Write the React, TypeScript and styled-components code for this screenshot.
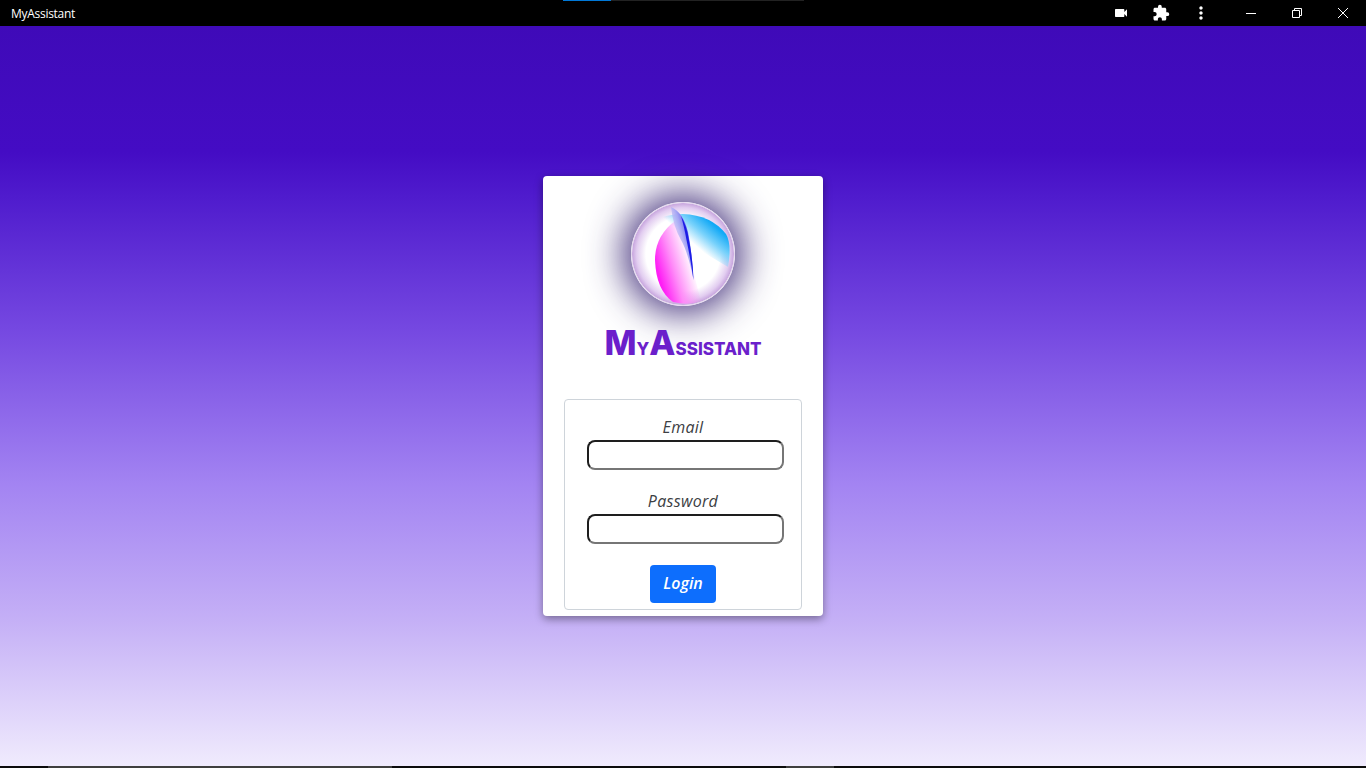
import React from 'react';
import styled, { createGlobalStyle } from 'styled-components';
import { MdExtension, MdMoreVert, MdVideocam } from 'react-icons/md';

const GlobalStyle = createGlobalStyle`
  html, body {
    margin: 0;
    padding: 0;
    height: 100%;
    overflow: hidden;
  }

  body {
    font-family: 'Open Sans', sans-serif;
  }

  * {
    box-sizing: border-box;
  }
`;

const Logo = () => (
  <svg width="104" height="104" viewBox="0 0 104 104">
    <defs>
      <radialGradient id="ball" cx="50%" cy="50%" r="50%">
        <stop offset="0" stopColor="#ffffff" />
        <stop offset="0.72" stopColor="#ffffff" />
        <stop offset="0.9" stopColor="#e2cdf0" />
        <stop offset="0.98" stopColor="#c9a8df" />
        <stop offset="1" stopColor="#efe6f5" />
      </radialGradient>
      <linearGradient id="sky" gradientUnits="userSpaceOnUse" x1="64" y1="43" x2="82" y2="22">
        <stop offset="0" stopColor="#79d2fb" stopOpacity="0" />
        <stop offset="0.5" stopColor="#79d2fb" />
        <stop offset="1" stopColor="#12a9f6" />
      </linearGradient>
      <linearGradient id="pink" gradientUnits="userSpaceOnUse" x1="24" y1="60" x2="58" y2="50">
        <stop offset="0" stopColor="#ff1df5" />
        <stop offset="0.45" stopColor="#ff8bf8" />
        <stop offset="1" stopColor="#ff8bf8" stopOpacity="0" />
      </linearGradient>
      <linearGradient id="blade" gradientUnits="userSpaceOnUse" x1="38" y1="30" x2="58" y2="24">
        <stop offset="0" stopColor="#d6c8f4" stopOpacity="0.2" />
        <stop offset="0.6" stopColor="#a8a8f4" />
        <stop offset="1" stopColor="#5a5aec" />
      </linearGradient>
    </defs>
    <circle cx="52" cy="52" r="51.5" fill="url(#ball)" stroke="#e4d6ee" strokeWidth="1" />
    <path d="M21 20 Q34 12 52 12 Q80 13 95 32 Q101 42 97 65 Z" fill="url(#sky)" />
    <path d="M44 19 Q24 34 24 58 Q25 88 42 100 Q58 104 70 99 L60 60 Z" fill="url(#pink)" />
    <path d="M40 5 Q52 10 57 30 Q61 50 62.5 78 Q57 50 50 38 Q42 24 40 5 Z" fill="url(#blade)" />
    <path d="M50 14 Q56 24 58 38 Q62 58 62.5 78 Q59 54 55.5 38 Q53 24 50 14 Z" fill="#1c1ce6" />
  </svg>
);

const App = () => {
  return (
    <Window>
      <GlobalStyle />
      <TitleBar>
        <AppName>MyAssistant</AppName>
        <Progress>
          <ProgressFill />
        </Progress>
        <ToolIcons>
          <ToolIcon>
            <MdVideocam size={16} />
          </ToolIcon>
          <ToolIcon>
            <MdExtension size={18} />
          </ToolIcon>
          <ToolIcon>
            <MdMoreVert size={20} />
          </ToolIcon>
        </ToolIcons>
        <WindowControls>
          <ControlButton>
            <svg width="10" height="10" viewBox="0 0 10 10">
              <path d="M0 5.5h10" stroke="#fff" fill="none" />
            </svg>
          </ControlButton>
          <ControlButton>
            <svg width="10" height="10" viewBox="0 0 10 10">
              <path d="M.5 2.5h7v7h-7zM2.5 2.5v-2h7v7h-2" stroke="#fff" fill="none" />
            </svg>
          </ControlButton>
          <ControlButton>
            <svg width="10" height="10" viewBox="0 0 10 10">
              <path d="M0 0l10 10M10 0L0 10" stroke="#fff" fill="none" />
            </svg>
          </ControlButton>
        </WindowControls>
      </TitleBar>
      <Main>
        <Card>
          <LogoGlow>
            <Logo />
          </LogoGlow>
          <Brand>
            M<BrandSmall>y</BrandSmall>A<BrandSmall>ssistant</BrandSmall>
          </Brand>
          <LoginForm>
            <Field>
              <FieldLabel htmlFor="email">Email</FieldLabel>
              <FieldInput id="email" type="text" />
            </Field>
            <Field>
              <FieldLabel htmlFor="password">Password</FieldLabel>
              <FieldInput id="password" type="password" />
            </Field>
            <LoginButton type="button">Login</LoginButton>
          </LoginForm>
        </Card>
      </Main>
      <BottomBar>
        <BottomSegment $width={344} $gap={48} />
        <BottomSegment $width={48} $gap={394} />
      </BottomBar>
    </Window>
  );
};

const Window = styled.div`
  display: flex;
  flex-direction: column;
  width: 100vw;
  height: 100vh;
  background: #000000;
`;

const TitleBar = styled.div`
  position: relative;
  display: flex;
  align-items: center;
  flex: 0 0 26px;
  padding-left: 11px;
  background: #000000;
  color: #ffffff;
`;

const AppName = styled.span`
  flex: 1;
  padding-top: 2px;
  font-family: 'Open Sans', sans-serif;
  font-size: 12px;
  line-height: 24px;
  letter-spacing: -0.28px;
`;

const Progress = styled.div`
  position: absolute;
  top: 0;
  left: 563px;
  width: 241px;
  height: 1px;
  background: #222222;
`;

const ProgressFill = styled.div`
  width: 48px;
  height: 100%;
  background: #0078d7;
`;

const ToolIcons = styled.div`
  display: flex;
  align-items: center;
  margin-right: 7px;
  color: #ffffff;
`;

const ToolIcon = styled.div`
  display: flex;
  align-items: center;
  justify-content: center;
  width: 40px;
  height: 26px;
`;

const WindowControls = styled.div`
  display: flex;
`;

const ControlButton = styled.div`
  display: flex;
  align-items: center;
  justify-content: center;
  width: 46px;
  height: 26px;

  svg {
    display: block;
  }
`;

const Main = styled.main`
  display: flex;
  flex: 1;
  align-items: center;
  justify-content: center;
  background: linear-gradient(
    180deg,
    #3f0ab8 0,
    #440cc4 17%,
    #4f1bcd 23%,
    #7548e1 41%,
    #a384f2 62%,
    #c4aff6 80%,
    #f0ebfd 100%
  );
`;

const Card = styled.section`
  display: flex;
  flex-direction: column;
  align-items: center;
  width: 280px;
  height: 440px;
  padding-top: 26px;
  background: #ffffff;
  border-radius: 4px;
  box-shadow: 0 3px 8px rgba(0, 0, 0, 0.4);
`;

const LogoGlow = styled.div`
  width: 104px;
  height: 104px;
  border-radius: 50%;
  box-shadow: 0 0 36px 8px rgba(55, 35, 115, 0.9);

  svg {
    display: block;
  }
`;

const Brand = styled.h1`
  display: flex;
  align-items: baseline;
  height: 38px;
  margin: 18px 0 0;
  font-family: 'Inter', sans-serif;
  font-size: 34px;
  line-height: 38px;
  font-weight: 800;
  color: #6b1fcb;
`;

const BrandSmall = styled.span`
  font-size: 17px;
  text-transform: uppercase;
`;

const LoginForm = styled.form`
  display: flex;
  flex-direction: column;
  align-items: center;
  width: 238px;
  height: 211px;
  margin-top: 37px;
  padding-top: 16px;
  border: 1px solid #ced4da;
  border-radius: 4px;
`;

const Field = styled.div`
  display: flex;
  flex-direction: column;
  align-items: center;
  margin-bottom: 20px;
`;

const FieldLabel = styled.label`
  margin-bottom: 2px;
  font-size: 16px;
  line-height: 22px;
  font-style: italic;
  letter-spacing: 0.3px;
  color: #3c4043;
`;

const FieldInput = styled.input`
  width: 197px;
  height: 30px;
  margin-left: 5px;
  background: #ffffff;
  border: 2px solid;
  border-color: #1e1e1e #767676 #767676 #1e1e1e;
  border-radius: 8px;
`;

const LoginButton = styled.button`
  width: 66px;
  height: 38px;
  margin-top: 1px;
  padding: 0 0 2px;
  background: #0d6efd;
  border: 0;
  border-radius: 4px;
  color: #ffffff;
  font-family: 'Open Sans', sans-serif;
  font-size: 16px;
  font-style: italic;
  font-weight: 600;
`;

const BottomBar = styled.div`
  display: flex;
  flex: 0 0 2px;
  background: #0c0c0c;
`;

const BottomSegment = styled.div<{ $width: number; $gap: number }>`
  width: ${(props) => props.$width}px;
  margin-left: ${(props) => props.$gap}px;
  background: #3f3f3f;
`;

export default App;
